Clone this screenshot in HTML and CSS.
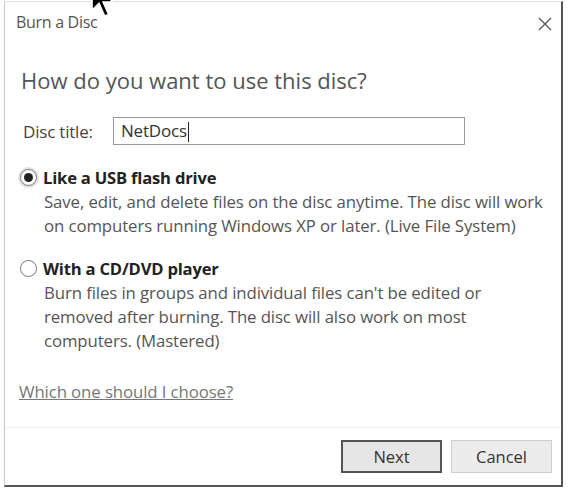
FILE: index.html
```html
<!DOCTYPE html>
<html>
<head>
<meta charset="utf-8">
<link rel="stylesheet" href="styles.css">
</head>
<body>
<div class="dialog">
  <div class="titlebar">
    <span class="title">Burn a Disc</span>
    <svg class="close" width="16" height="16" viewBox="0 0 16 16"><path d="M2 2L14 14M14 2L2 14" stroke="#555" stroke-width="1.3" fill="none"/></svg>
  </div>
  <div class="main">
    <h1 class="heading">How do you want to use this disc?</h1>
    <div class="field">
      <label class="field-label">Disc title:</label>
      <div class="input">NetDocs<span class="caret"></span></div>
    </div>
    <div class="option">
      <div class="option-head"><span class="radio checked"></span><span class="option-label">Like a USB flash drive</span></div>
      <p class="option-desc">Save, edit, and delete files on the disc anytime. The disc will work<br>on computers running Windows XP or later. (Live File System)</p>
    </div>
    <div class="option second">
      <div class="option-head"><span class="radio"></span><span class="option-label">With a CD/DVD player</span></div>
      <p class="option-desc">Burn files in groups and individual files can't be edited or<br>removed after burning. The disc will also work on most<br>computers. (Mastered)</p>
    </div>
    <a class="help-link">Which one should I choose?</a>
  </div>
  <div class="footer">
    <button class="btn default">Next</button>
    <button class="btn">Cancel</button>
  </div>
</div>
<svg class="cursor" width="34" height="20" viewBox="0 0 34 20"><path transform="translate(2,-19) scale(1.4)" d="M0 0 L0 21 L5 16 L9 25 L12 24 L8 15 L15 15 Z" fill="#000" stroke="#fff" stroke-width="1.2"/></svg>
</body>
</html>
```
FILE: styles.css
```css
html, body { margin: 0; padding: 0; background: #fff; }
body {
  width: 569px; height: 491px; overflow: hidden; position: relative;
  font-family: "Open Sans", "Noto Sans", sans-serif;
  color: #444;
}
.dialog {
  margin: 1px 0 0 4px;
  width: 559px;
  height: 486px;
  box-sizing: border-box;
  border-top: 1px solid #e0e0e0;
  border-left: 1px solid #c8c8c8;
  border-right: 2px solid #555;
  border-bottom: 2px solid #555;
  background: #fff;
  display: flex;
  flex-direction: column;
}
.titlebar {
  height: 40px;
  display: flex;
  align-items: center;
  justify-content: space-between;
  padding: 0 8px 0 11px;
}
.title { font-size: 16px; color: #555; letter-spacing: -0.3px; }
.close { margin-top: 4px; }
.main { padding: 0 6px 0 16px; flex: 1; display: flex; flex-direction: column; align-items: flex-start; }
.heading {
  margin: 24px 0 0;
  font-size: 22px;
  font-weight: normal;
  line-height: 28px;
  color: #555;
}
.field { display: flex; align-items: center; margin-top: 23px; padding-left: 2px; }
.field-label { font-size: 17px; width: 90px; color: #444; letter-spacing: -0.2px; }
.input {
  width: 352px; height: 28px; box-sizing: border-box;
  border: 1px solid #999;
  font-size: 17px; line-height: 26px; padding-left: 7px; color: #333; letter-spacing: -0.2px;
}
.caret { display: inline-block; width: 1px; height: 20px; background: #222; vertical-align: middle; margin-left: 1px; }
.option { margin-top: 20px; }
.option.second { margin-top: 18px; }
.option-head { display: flex; align-items: center; height: 24px; }
.radio {
  width: 17px; height: 17px; border: 1px solid #777; border-radius: 50%;
  margin: 0 6px 0 -1px; box-sizing: border-box; display: flex; align-items: center; justify-content: center;
  background: #fff;
}
.radio.checked { box-shadow: 0 0 0 2px #e4e4e4; }
.radio.checked::after { content: ""; width: 9px; height: 9px; border-radius: 50%; background: #222; }
.option-label { font-size: 16.6px; font-weight: bold; color: #222; letter-spacing: -0.2px; }
.option-desc { margin: 1px 0 0 23px; font-size: 16.8px; line-height: 24px; color: #555; letter-spacing: -0.1px; white-space: nowrap; }
.help-link { margin: 27px 0 0 -2px; font-size: 16.8px; line-height: 24px; color: #777; text-decoration: underline; letter-spacing: -0.1px; }
.footer {
  border-top: 1px solid #f0f0f0;
  height: 58px; box-sizing: border-box;
  display: flex; justify-content: flex-end; align-items: flex-start;
  gap: 9px; padding: 12px 9px 0 0;
}
.btn {
  font-family: inherit; font-size: 16.5px; color: #333;
  width: 101px; height: 33px; box-sizing: border-box;
  background: #ececec; border: 1px solid #cfcfcf; border-radius: 0;
}
.btn.default { border: 2px solid #555; background: #e6e6e6; }
.cursor { position: absolute; left: 90px; top: 0; }
```
